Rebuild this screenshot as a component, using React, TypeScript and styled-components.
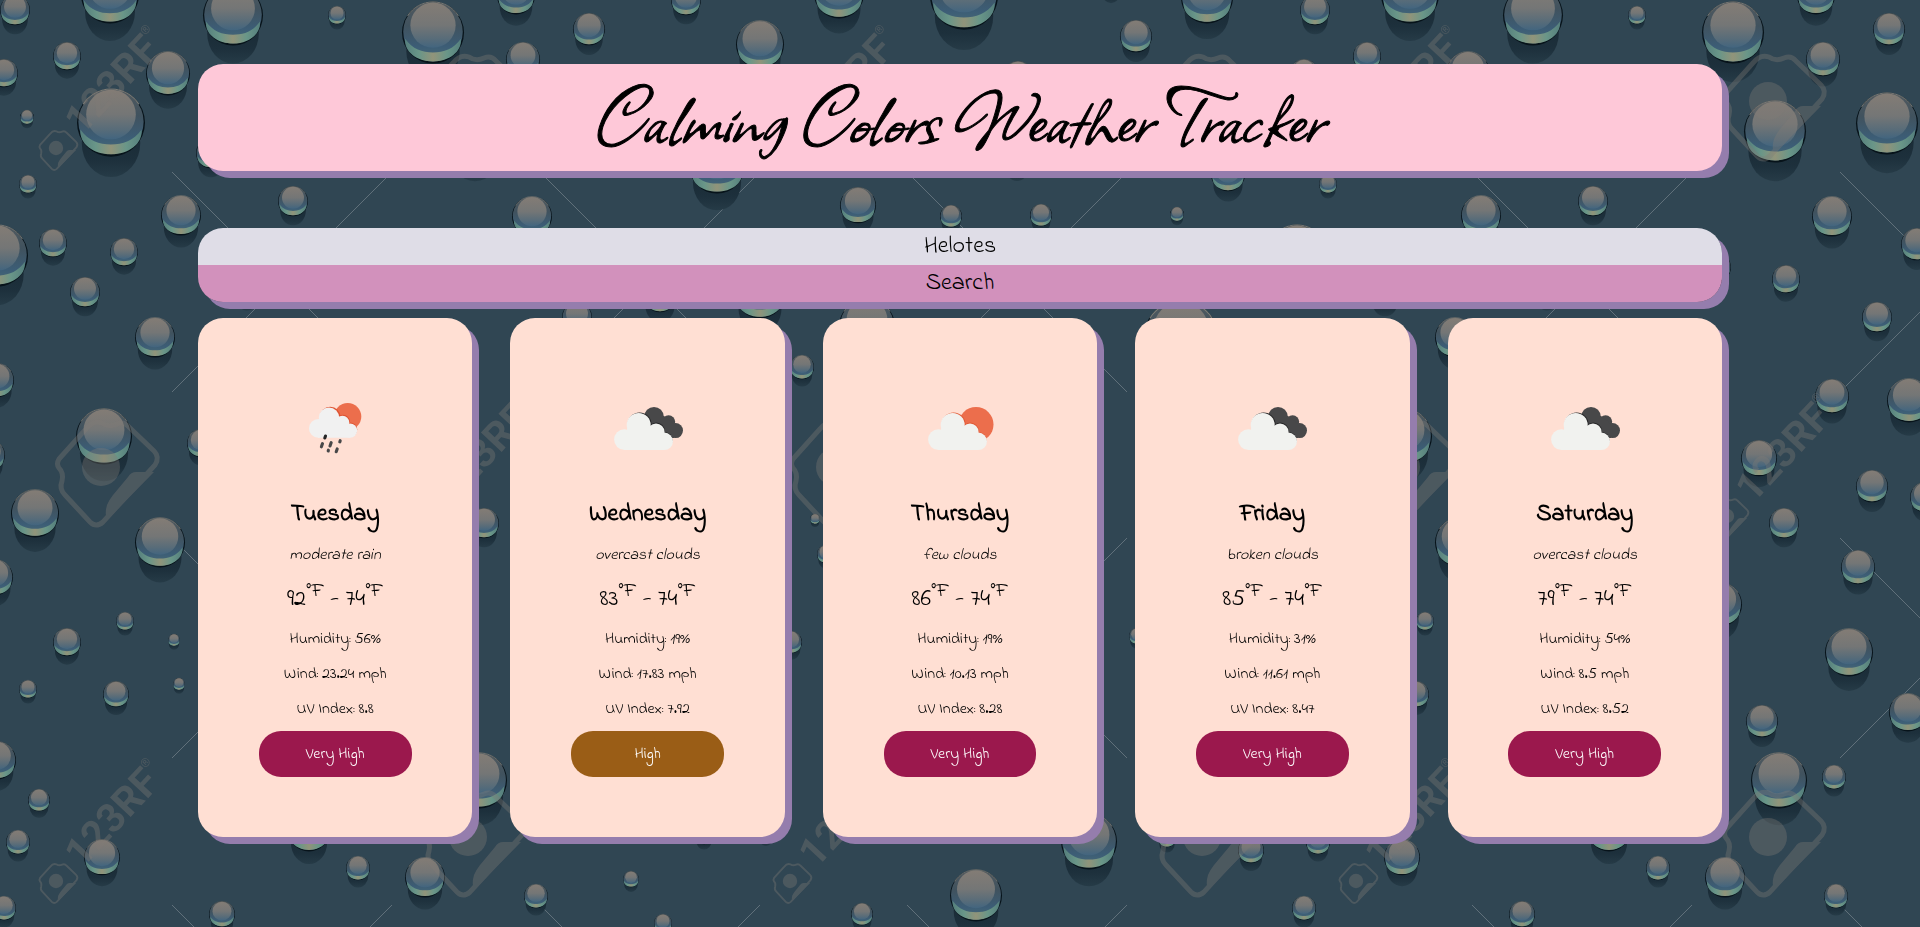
import React, { useState } from "react";
import styled, { createGlobalStyle } from "styled-components";

const GlobalStyle = createGlobalStyle`
  *, *::before, *::after { box-sizing: border-box; }
  body {
    margin: 0;
    background: #304653;
    color: #000;
    font-family: "Indie Flower", Lato, "Liberation Sans", sans-serif;
  }
`;

const Page = styled.div`
  min-height: 100vh;
  padding: 64px 198px 72px;

  @media (max-width: 1200px) {
    padding: 32px 24px;
  }
`;

const Backdrop = styled.svg`
  position: fixed;
  inset: 0;
  z-index: -1;
  width: 100%;
  height: 100%;
`;

const Banner = styled.header`
  display: flex;
  align-items: center;
  justify-content: center;
  min-height: 107px;
  border-radius: 25px;
  background: #fec8d8;
  box-shadow: 7px 7px #957dad;
`;

const Title = styled.h1`
  margin: 0;
  font-family: Allison, "Liberation Serif", serif;
  font-size: 89px;
  font-weight: 400;
  line-height: 107px;
  text-align: center;
  -webkit-text-stroke: 1px #000;
`;

const SearchForm = styled.form`
  display: flex;
  flex-direction: column;
  margin-top: 57px;
  overflow: hidden;
  border-radius: 25px;
  box-shadow: 7px 7px #957dad;
`;

const CityInput = styled.input`
  height: 37px;
  padding: 0 16px;
  border: 0;
  background: #dfdde7;
  color: #000;
  font: inherit;
  font-size: 24px;
  line-height: 36px;
  text-align: center;
`;

const SearchButton = styled.button`
  height: 37px;
  padding: 0 16px;
  border: 0;
  background: #d291bc;
  color: #000;
  font: inherit;
  font-size: 24px;
  line-height: 36px;
  cursor: pointer;
`;

const Forecast = styled.main`
  display: grid;
  grid-template-columns: repeat(5, minmax(0, 1fr));
  gap: 38px;
  margin-top: 16px;

  @media (max-width: 1200px) {
    grid-template-columns: repeat(auto-fit, minmax(220px, 1fr));
  }
`;

const Card = styled.article`
  display: flex;
  flex-direction: column;
  align-items: center;
  padding: 62px 16px 60px;
  border-radius: 25px;
  background: #ffdfd3;
  box-shadow: 7px 7px #957dad;
  text-align: center;
`;

const WeatherIcon = styled.svg`
  width: 100px;
  height: 100px;
`;

const DayName = styled.h2`
  margin: 19px 0 0;
  font-size: 24px;
  font-weight: 700;
  line-height: 32px;
`;

const Condition = styled.p`
  margin: 14px 0 0;
  font-size: 16px;
  font-style: italic;
  line-height: 20px;
`;

const Temperature = styled.p`
  margin: 23px 0 17px;
  font-size: 24px;
  line-height: 24px;

  sup {
    font-size: 20px;
    line-height: 0;
  }
`;

const Detail = styled.p`
  margin: 0 0 15px;
  font-size: 16px;
  line-height: 20px;
`;

const UvBadge = styled.button<{ $color: string }>`
  width: 63%;
  height: 46px;
  margin-top: -3px;
  border: 0;
  border-radius: 22px;
  background: ${(p) => p.$color};
  color: #fff;
  font: inherit;
  font-size: 16px;
`;

type IconKind = "rain" | "overcast" | "few";

function Cloud() {
  return (
    <g fill="#f1f2ef">
      <circle cx="26.5" cy="59.6" r="10.4" />
      <circle cx="40.7" cy="45" r="12" />
      <circle cx="58" cy="52" r="8.6" />
      <circle cx="66.3" cy="61.3" r="8.7" />
      <path d="M26 70 L30 44 L50 44 L66 58 V70 Z" />
    </g>
  );
}

function Icon({ kind }: { kind: IconKind }) {
  if (kind === "rain") {
    return (
      <WeatherIcon viewBox="0 0 100 100" aria-hidden="true">
        <circle cx="62.7" cy="36.5" r="13.6" fill="#ec6e4c" />
        <g fill="#de5331">
          <circle cx="45.2" cy="37.2" r="10.4" />
          <circle cx="58" cy="41.6" r="6.9" />
          <circle cx="65" cy="49.6" r="7.2" />
        </g>
        <g fill="#f1f1f1">
          <circle cx="33.4" cy="48.4" r="9.4" />
          <circle cx="44" cy="37.6" r="10.2" />
          <circle cx="57.4" cy="42.6" r="6.9" />
          <circle cx="65" cy="50.6" r="7.2" />
          <path d="M33 57.8 L35 40 H53 L65 48 V57.8 Z" />
        </g>
        <g stroke="#484849" strokeWidth="3.1" strokeLinecap="round">
          <path d="M40.5 56 l-.7 2" stroke="#242425" />
          <path d="M37.5 63.6 l-1.1 3.2 M46.2 62.6 l-1.2 3.4 M55.2 60.7 l-.4 1.2 M43.4 70.2 l-.2 .8 M52.2 68.9 l-1 2.8" />
        </g>
      </WeatherIcon>
    );
  }
  if (kind === "few") {
    return (
      <WeatherIcon viewBox="0 0 100 100" aria-hidden="true">
        <circle cx="66" cy="44.5" r="17.5" fill="#ec6e4c" />
        <g transform="translate(2 0)">
          <g fill="#e05a36">
            <circle cx="41.6" cy="44.4" r="12" />
            <circle cx="58.3" cy="51" r="8.6" />
            <circle cx="65.8" cy="60.4" r="8.7" />
          </g>
          <Cloud />
        </g>
      </WeatherIcon>
    );
  }
  return (
    <WeatherIcon viewBox="0 0 100 100" aria-hidden="true">
      <g fill="#484849">
        <circle cx="56" cy="36.8" r="9.8" />
        <circle cx="70.6" cy="41.8" r="6.6" />
        <circle cx="77.5" cy="50.6" r="7.5" />
        <path d="M50 36 H66 L76 44 V58 H58 Z" />
      </g>
      <g fill="#262627">
        <circle cx="41.6" cy="44.4" r="12" />
        <circle cx="58.3" cy="51" r="8.6" />
        <circle cx="65.8" cy="60.4" r="8.7" />
      </g>
      <Cloud />
    </WeatherIcon>
  );
}

// Each droplet is [centre x, centre y, radius] within a 1300px wide tile.
const DROPS: [number, number, number][] = [
  [15, 10, 15], [110, -6, 29], [233, 15, 30], [337, 15, 9], [433, 32, 31],
  [516, -5, 19], [589, 29, 16], [67, 56, 14], [168, 73, 22], [4, 73, 14],
  [111, 122, 34], [27, 117, 7], [523, 59, 17], [28, 184, 9], [211, 153, 15],
  [181, 215, 20], [293, 201, 15], [532, 216, 20], [-3, 255, 31], [53, 243, 14],
  [124, 252, 14], [85, 292, 15], [155, 337, 20], [577, 317, 15], [247, 291, 12],
  [686, 0, 15], [839, -7, 25], [760, 44, 24], [964, -5, 34], [1136, 36, 16],
  [1207, -3, 26], [1111, -13, 10], [1018, 77, 16], [717, 165, 28], [858, 205, 18],
  [951, 216, 11], [1041, 215, 11], [1177, 214, 7], [1228, 174, 17], [1017, 160, 13],
  [660, 295, 17], [760, 293, 25], [867, 326, 28], [1181, 338, 38], [-3, 380, 17],
  [104, 436, 28], [201, 443, 14], [-11, 455, 16], [35, 513, 24], [160, 542, 25],
  [-5, 577, 18], [125, 621, 9], [484, 523, 15], [802, 367, 12], [815, 519, 5],
  [826, 554, 9], [532, 396, 17], [609, 400, 22], [459, 458, 18], [572, 486, 16],
  [625, 497, 15], [558, 567, 17], [420, 604, 22], [486, 279, 14], [617, 244, 16],
  [475, 131, 31], [587, 123, 31], [417, 267, 14], [67, 642, 14], [174, 640, 6],
  [179, 684, 6], [28, 689, 9], [116, 694, 13], [-3, 760, 19], [39, 800, 11],
  [18, 842, 12], [102, 857, 18], [4, 908, 12], [222, 914, 13], [309, 830, 21],
  [358, 868, 12], [425, 877, 20], [479, 780, 28], [536, 896, 12], [631, 879, 8],
  [791, 642, 11], [1137, 636, 8], [704, 835, 9], [766, 833, 8], [1089, 841, 28],
  [976, 895, 26], [862, 914, 11], [663, 923, 9], [1167, 838, 9], [1251, 850, 13],
  [549, 652, 24], [608, 712, 19], [462, 721, 16], [534, 777, 12],
];

const CROSSES = [282, 648, 1015].flatMap((y) => [282, 650, 1017].map((x) => [x, y]));
const STAMPS = [[56, 148], [790, 148], [427, 516], [56, 881], [790, 881]];
const CAMERAS = [[468, 101], [1202, 101], [101, 467], [835, 467], [468, 837], [1202, 837]];

function Droplets() {
  return (
    <Backdrop aria-hidden="true">
      <defs>
        <linearGradient id="body" x1="0" y1="0" x2="0" y2="1">
          <stop offset="0" stopColor="#525a5f" />
          <stop offset=".4" stopColor="#40525e" />
          <stop offset=".75" stopColor="#3c5d76" />
          <stop offset="1" stopColor="#4a6c76" />
        </linearGradient>
        <linearGradient id="head" x1="0" y1="0" x2="0" y2="1">
          <stop offset="0" stopColor="#837c75" />
          <stop offset=".5" stopColor="#747676" />
          <stop offset=".8" stopColor="#586c79" />
          <stop offset="1" stopColor="#42657f" />
        </linearGradient>
        <linearGradient id="glow">
          <stop offset="0" stopColor="#557f7d" />
          <stop offset=".25" stopColor="#699688" />
          <stop offset=".5" stopColor="#91947a" />
          <stop offset=".75" stopColor="#699688" />
          <stop offset="1" stopColor="#557f7d" />
        </linearGradient>
        <linearGradient id="shade" x1="0" y1="0" x2="0" y2="1">
          <stop offset="0" stopColor="#16252e" />
          <stop offset=".75" stopColor="#1d303c" />
          <stop offset="1" stopColor="#263b47" />
        </linearGradient>
        <g id="drop">
          <ellipse cy="62" rx="86" ry="100" fill="url(#shade)" />
          <circle cy="2" r="100" fill="#07131a" />
          <circle cy="-1" r="96" fill="url(#body)" />
          <path d="M-90 22 C-66 56 -35 66 0 66 S66 56 90 22 C94 64 52 95 0 95 S-94 64 -90 22Z" fill="url(#glow)" />
          <circle cy="-22" r="73" fill="url(#head)" />
          <path d="M-82 -52 A97 97 0 0 1 82 -52" fill="none" stroke="#7d7d78" strokeWidth="3" />
        </g>
        <g id="camera">
          <circle r="19" />
          <path d="M35 5 H53 L7 52 Q3 48 6 38 Q8 33 12 28 L27 10 Q30 5 35 5Z" />
          <path
            d="M-42 -8 L-15 -38 Q-8 -47 1 -44 Q8 -39 16 -43 Q23 -46 28 -40 L53 -16 Q59 -10 54 -2 L2 55 Q-5 61 -11 55 L-36 28 Q-42 22 -39 14 Q-37 6 -42 1 Q-45 -3 -42 -8Z"
            fill="none"
            stroke="#817b77"
            strokeWidth="5"
          />
        </g>
        <g id="tile">
          <g stroke="#89939a" strokeOpacity=".55" strokeWidth="1">
            {CROSSES.map(([x, y]) => (
              <path key={`${x}-${y}`} d={`M${x - 110} ${y - 110} l220 220 m0 -220 l-220 220`} />
            ))}
          </g>
          {DROPS.map(([x, y, r]) => (
            <use key={`${x}-${y}`} href="#drop" transform={`translate(${x} ${y}) scale(${r / 100})`} />
          ))}
          <g fill="#817b77" opacity=".36">
            {CAMERAS.map(([x, y]) => (
              <use key={`${x}-${y}`} href="#camera" x={x} y={y} />
            ))}
            {STAMPS.map(([x, y]) => (
              <g key={`${x}-${y}`} transform={`translate(${x} ${y})`}>
                <use href="#camera" transform="scale(.38)" />
                <text
                  transform="translate(26 -12) rotate(-47)"
                  fontFamily="Roboto, sans-serif"
                  fontSize="40"
                  fontWeight="700"
                >
                  123RF
                  <tspan fontSize="12" dy="-22">®</tspan>
                </text>
              </g>
            ))}
          </g>
        </g>
      </defs>
      <use href="#tile" />
      <use href="#tile" x="1300" />
      <use href="#tile" x="2600" />
    </Backdrop>
  );
}

const VERY_HIGH = "#9b184d";
const HIGH = "#9a5d16";

interface Day {
  name: string;
  icon: IconKind;
  condition: string;
  high: number;
  low: number;
  humidity: number;
  wind: number;
  uv: number;
  level: string;
}

const DAYS: Day[] = [
  { name: "Tuesday", icon: "rain", condition: "moderate rain", high: 92, low: 74, humidity: 56, wind: 23.24, uv: 8.8, level: "Very High" },
  { name: "Wednesday", icon: "overcast", condition: "overcast clouds", high: 83, low: 74, humidity: 19, wind: 17.83, uv: 7.92, level: "High" },
  { name: "Thursday", icon: "few", condition: "few clouds", high: 86, low: 74, humidity: 19, wind: 10.13, uv: 8.28, level: "Very High" },
  { name: "Friday", icon: "overcast", condition: "broken clouds", high: 85, low: 74, humidity: 31, wind: 11.61, uv: 8.47, level: "Very High" },
  { name: "Saturday", icon: "overcast", condition: "overcast clouds", high: 79, low: 74, humidity: 54, wind: 8.5, uv: 8.52, level: "Very High" },
];

export default function App() {
  const [city, setCity] = useState("Helotes");
  return (
    <>
      <GlobalStyle />
      <Droplets />
      <Page>
        <Banner>
          <Title>Calming Colors Weather Tracker</Title>
        </Banner>
        <SearchForm onSubmit={(e) => e.preventDefault()}>
          <CityInput type="text" aria-label="City" value={city} onChange={(e) => setCity(e.target.value)} />
          <SearchButton type="submit">Search</SearchButton>
        </SearchForm>
        <Forecast>
          {DAYS.map((day) => (
            <Card key={day.name}>
              <Icon kind={day.icon} />
              <DayName>{day.name}</DayName>
              <Condition>{day.condition}</Condition>
              <Temperature>
                {day.high}<sup>°F</sup> - {day.low}<sup>°F</sup>
              </Temperature>
              <Detail>Humidity: {day.humidity}%</Detail>
              <Detail>Wind: {day.wind} mph</Detail>
              <Detail>UV Index: {day.uv}</Detail>
              <UvBadge type="button" $color={day.level === "High" ? HIGH : VERY_HIGH}>
                {day.level}
              </UvBadge>
            </Card>
          ))}
        </Forecast>
      </Page>
    </>
  );
}
